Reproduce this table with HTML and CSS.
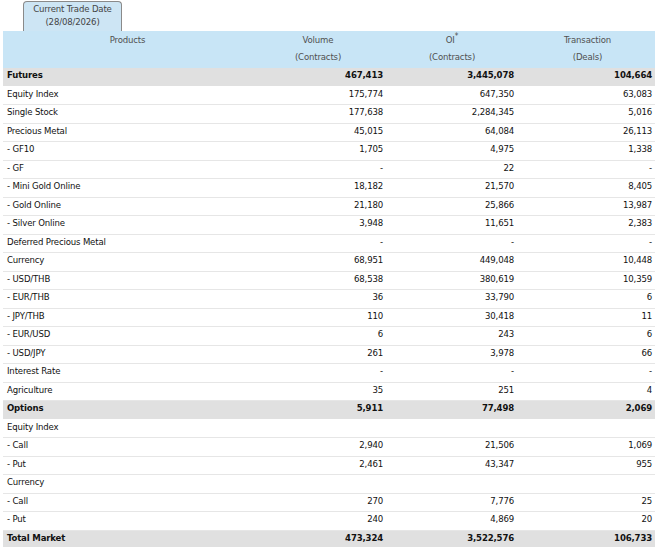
FILE: index.html
```html
<!DOCTYPE html>
<html>
<head>
<meta charset="utf-8">
<link rel="stylesheet" href="styles.css">
</head>
<body>
<div class="wrap">
  <div class="tab">Current Trade Date<br>(28/08/2026)</div>
  <table class="stats">
    <colgroup>
      <col class="c-prod"><col class="c-vol"><col class="c-oi"><col class="c-tx">
    </colgroup>
    <thead>
      <tr>
        <th class="h-prod">Products</th>
        <th>Volume<br>(Contracts)</th>
        <th>OI<sup>*</sup><br>(Contracts)</th>
        <th>Transaction<br>(Deals)</th>
      </tr>
    </thead>
    <tbody>
      <tr class="sum"><td>Futures</td><td>467,413</td><td>3,445,078</td><td>104,664</td></tr>
      <tr><td>Equity Index</td><td>175,774</td><td>647,350</td><td>63,083</td></tr>
      <tr><td>Single Stock</td><td>177,638</td><td>2,284,345</td><td>5,016</td></tr>
      <tr><td>Precious Metal</td><td>45,015</td><td>64,084</td><td>26,113</td></tr>
      <tr><td>- GF10</td><td>1,705</td><td>4,975</td><td>1,338</td></tr>
      <tr><td>- GF</td><td>-</td><td>22</td><td>-</td></tr>
      <tr><td>- Mini Gold Online</td><td>18,182</td><td>21,570</td><td>8,405</td></tr>
      <tr><td>- Gold Online</td><td>21,180</td><td>25,866</td><td>13,987</td></tr>
      <tr><td>- Silver Online</td><td>3,948</td><td>11,651</td><td>2,383</td></tr>
      <tr><td>Deferred Precious Metal</td><td>-</td><td>-</td><td>-</td></tr>
      <tr><td>Currency</td><td>68,951</td><td>449,048</td><td>10,448</td></tr>
      <tr><td>- USD/THB</td><td>68,538</td><td>380,619</td><td>10,359</td></tr>
      <tr><td>- EUR/THB</td><td>36</td><td>33,790</td><td>6</td></tr>
      <tr><td>- JPY/THB</td><td>110</td><td>30,418</td><td>11</td></tr>
      <tr><td>- EUR/USD</td><td>6</td><td>243</td><td>6</td></tr>
      <tr><td>- USD/JPY</td><td>261</td><td>3,978</td><td>66</td></tr>
      <tr><td>Interest Rate</td><td>-</td><td>-</td><td>-</td></tr>
      <tr><td>Agriculture</td><td>35</td><td>251</td><td>4</td></tr>
      <tr class="sum"><td>Options</td><td>5,911</td><td>77,498</td><td>2,069</td></tr>
      <tr><td>Equity Index</td><td></td><td></td><td></td></tr>
      <tr><td>- Call</td><td>2,940</td><td>21,506</td><td>1,069</td></tr>
      <tr><td>- Put</td><td>2,461</td><td>43,347</td><td>955</td></tr>
      <tr><td>Currency</td><td></td><td></td><td></td></tr>
      <tr><td>- Call</td><td>270</td><td>7,776</td><td>25</td></tr>
      <tr><td>- Put</td><td>240</td><td>4,869</td><td>20</td></tr>
      <tr class="sum"><td>Total Market</td><td>473,324</td><td>3,522,576</td><td>106,733</td></tr>
    </tbody>
  </table>
</div>
</body>
</html>
```
FILE: styles.css
```css
html, body {
  margin: 0;
  padding: 0;
  background: #ffffff;
}

body {
  font-family: "DejaVu Sans Condensed", "DejaVu Sans", sans-serif;
  font-stretch: condensed;
  font-size: 9.5px;
  letter-spacing: -0.15px;
  color: #111111;
}

.wrap {
  padding: 1px 3px 0 3px;
}

.tab {
  margin-left: 20px;
  width: 97px;
  height: 29px;
  border: 1px solid #8a8a8a;
  border-bottom: none;
  border-radius: 4px 4px 0 0;
  background: #cde5f4;
  color: #444444;
  text-align: center;
  line-height: 13px;
  padding-top: 0;
  box-sizing: content-box;
}

.stats {
  width: 652px;
  border-collapse: separate;
  border-spacing: 0;
  table-layout: fixed;
}

.c-prod { width: 249px; }
.c-vol { width: 132px; }
.c-oi { width: 136px; }
.c-tx { width: 135px; }

.stats thead th {
  background: #c8e5f6;
  color: #505050;
  font-weight: normal;
  text-align: center;
  vertical-align: top;
  line-height: 17px;
  height: 37px;
  padding: 0;
  box-sizing: border-box;
}

.stats sup {
  font-size: 8px;
  line-height: 0;
  vertical-align: 4px;
}

.stats tbody td {
  height: 17.5px;
  padding: 0;
  line-height: 14px;
  vertical-align: top;
  border-bottom: 1px solid #e6e6e6;
  text-align: right;
  white-space: nowrap;
}

.stats tbody td:first-child {
  text-align: left;
  padding-left: 4px;
}

.stats tbody td:nth-child(2) { padding-right: 1px; }
.stats tbody td:nth-child(3) { padding-right: 6px; }
.stats tbody td:nth-child(4) { padding-right: 3px; }

.stats tbody tr.sum td {
  background: #e0e0e0;
  font-weight: bold;
  border-bottom-color: #ffffff;
}
```
